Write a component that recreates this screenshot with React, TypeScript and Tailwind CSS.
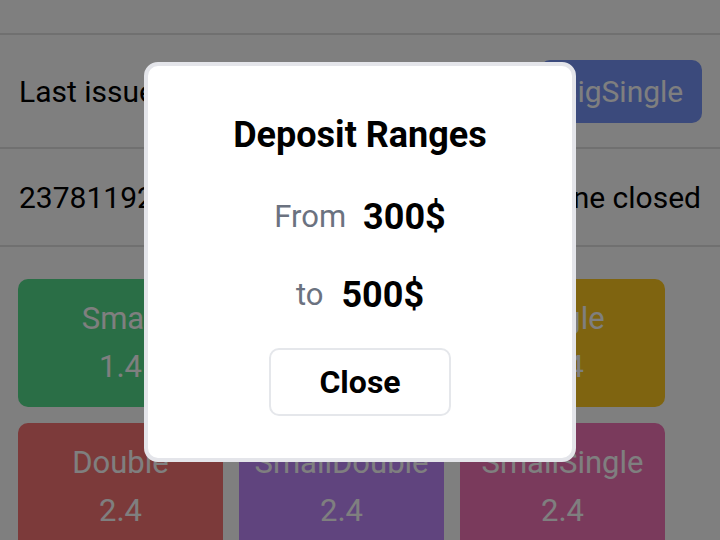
import { useState } from "react";

const bets = [
  { name: "Small", odds: "1.4", color: "bg-[#54dc8c]" },
  { name: "Big", odds: "1.4", color: "bg-[#7694f8]" },
  { name: "Single", odds: "2.4", color: "bg-[#ffc820]" },
  { name: "Double", odds: "2.4", color: "bg-[#f87474]" },
  { name: "SmallDouble", odds: "2.4", color: "bg-[#c088fc]" },
  { name: "SmallSingle", odds: "2.4", color: "bg-[#f474b8]" },
];

export default function App() {
  const [open, setOpen] = useState(true);

  return (
    <div className="relative h-[540px] w-[720px] overflow-hidden bg-white font-['Roboto',sans-serif] text-black">
      {/* Header strip */}
      <div className="h-[35px] border-b-2 border-[#e0e0e0]" />

      {/* Last issue row */}
      <div className="flex h-[114px] items-center justify-between border-b-2 border-[#e0e0e0] pl-[19px] pr-[18px]">
        <span className="text-[30px]">Last issue</span>
        <button className="h-[63px] w-[162px] rounded-[10px] bg-[#7694f8] text-[30px] text-white">
          BigSingle
        </button>
      </div>

      {/* Issue number row */}
      <div className="flex h-[98px] items-center justify-between border-b-2 border-[#e0e0e0] pl-[19px] pr-[19px]">
        <span className="text-[30px]">23781192</span>
        <span className="text-[30px]">Line closed</span>
      </div>

      {/* Bet grid */}
      <div className="grid grid-cols-[repeat(3,205px)] gap-4 px-[18px] pt-8">
        {bets.map((b) => (
          <div
            key={b.name}
            className={`${b.color} flex h-[128px] flex-col items-center justify-center rounded-[10px] text-[31px] leading-[48px] text-white`}
          >
            <span>{b.name}</span>
            <span>{b.odds}</span>
          </div>
        ))}
      </div>

      {/* Modal */}
      {open && (
        <div className="absolute inset-0 bg-black/50">
          <div className="absolute left-[144px] top-[62px] flex h-[400px] w-[432px] flex-col items-center rounded-[14px] border-4 border-[#e4e5ea] bg-white pt-[47px]">
            <h2 className="text-[36px] font-bold leading-[44px]">Deposit Ranges</h2>
            <div className="mt-[38px] flex h-[44px] items-center gap-[17px]">
              <span className="text-[31px] text-[#6b7280]">From</span>
              <span className="text-[36px] font-bold">300$</span>
            </div>
            <div className="mt-[34px] flex h-[44px] items-center gap-[18px]">
              <span className="text-[31px] text-[#6b7280]">to</span>
              <span className="text-[36px] font-bold">500$</span>
            </div>
            <button
              onClick={() => setOpen(false)}
              className="mt-[31px] h-[68px] w-[182px] rounded-[10px] border-2 border-[#e5e7eb] bg-white text-[32px] font-bold"
            >
              Close
            </button>
          </div>
        </div>
      )}
    </div>
  );
}
